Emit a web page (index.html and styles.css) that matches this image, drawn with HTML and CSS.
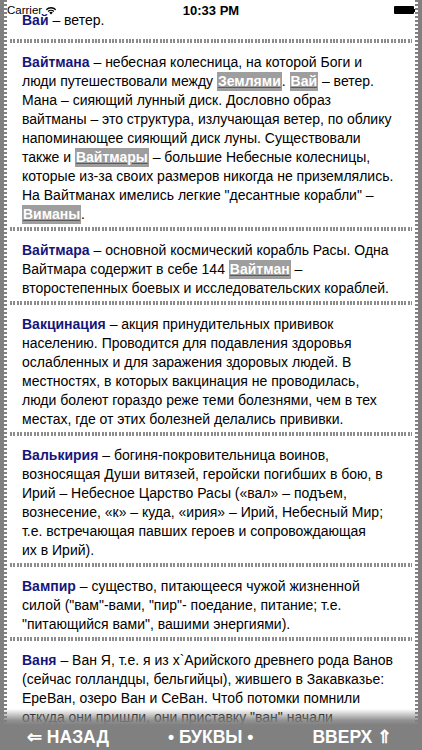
FILE: index.html
```html
<!DOCTYPE html>
<html lang="ru">
<head>
<meta charset="utf-8">
<title>Словарь</title>
<link rel="stylesheet" href="styles.css">
</head>
<body>
<div class="screen">
  <div class="content">
    <div class="strip">
      <div class="entry first"><b class="term">Вай</b> – ветер.</div>
      <div class="sep"></div>
      <div class="entry"><b class="term">Вайтмана</b> – небесная колесница, на которой Боги и<br>люди путешествовали между <span class="link">Землями</span>. <span class="link">Вай</span> – ветер.<br>Мана – сияющий лунный диск. Дословно образ<br>вайтманы – это структура, излучающая ветер, по облику<br>напоминающее сияющий диск луны. Существовали<br>также и <span class="link">Вайтмары</span> – большие Небесные колесницы,<br>которые из-за своих размеров никогда не приземлялись.<br>На Вайтманах имелись легкие "десантные корабли" –<br><span class="link">Виманы</span>.</div>
      <div class="sep"></div>
      <div class="entry"><b class="term">Вайтмара</b> – основной космический корабль Расы. Одна<br>Вайтмара содержит в себе 144 <span class="link">Вайтман</span> –<br>второстепенных боевых и исследовательских кораблей.</div>
      <div class="sep"></div>
      <div class="entry"><b class="term">Вакцинация</b> – акция принудительных прививок<br>населению. Проводится для подавления здоровья<br>ослабленных и для заражения здоровых людей. В<br>местностях, в которых вакцинация не проводилась,<br>люди болеют гораздо реже теми болезнями, чем в тех<br>местах, где от этих болезней делались прививки.</div>
      <div class="sep"></div>
      <div class="entry"><b class="term">Валькирия</b> – богиня-покровительница воинов,<br>возносящая Души витязей, геройски погибших в бою, в<br>Ирий – Небесное Царство Расы («вал» – подъем,<br>вознесение, «к» – куда, «ирия» – Ирий, Небесный Мир;<br>т.е. встречающая павших героев и сопровождающая<br>их в Ирий).</div>
      <div class="sep"></div>
      <div class="entry"><b class="term">Вампир</b> – существо, питающееся чужой жизненной<br>силой ("вам"-вами, "пир"- поедание, питание; т.е.<br>"питающийся вами", вашими энергиями).</div>
      <div class="sep"></div>
      <div class="entry"><b class="term">Ваня</b> – Ван Я, т.е. я из х`Арийского древнего рода Ванов<br>(сейчас голландцы, бельгийцы), жившего в Закавказье:<br>ЕреВан, озеро Ван и СеВан. Чтоб потомки помнили<br>откуда они пришли, они приставку "ван" начали<br>добавлять к своим фамилиям.</div>
    </div>
    <div class="fade"></div>
  </div>
  <div class="statusbar">
    <div class="carrier">Carrier
      <svg class="wifi" width="12" height="9" viewBox="0 0 12 9"><path d="M6 8.6 L4.2 6.6 A2.6 2.6 0 0 1 7.8 6.6 Z" fill="#000"/><path d="M2.6 5 A4.9 4.9 0 0 1 9.4 5 L8.5 6 A3.6 3.6 0 0 0 3.5 6 Z" fill="#000"/><path d="M0.8 3.2 A7.5 7.5 0 0 1 11.2 3.2 L10.3 4.2 A6.2 6.2 0 0 0 1.7 4.2 Z" fill="#000"/></svg>
    </div>
    <div class="time">10:33 PM</div>
    <div class="battery"><span class="cell"></span><span class="tip"></span></div>
  </div>
  <nav class="toolbar">
    <span class="btn">⇐ НАЗАД</span>
    <span class="btn">• БУКВЫ •</span>
    <span class="btn">ВВЕРХ ⇑</span>
  </nav>
</div>
</body>
</html>
```
FILE: styles.css
```css
html, body {
  margin: 0;
  padding: 0;
}
body {
  background: #808080;
  font-family: "Liberation Sans", Arial, sans-serif;
}
.screen {
  position: relative;
  width: 422px;
  height: 750px;
  overflow: hidden;
  background: #808080;
  display: flex;
  flex-direction: column;
}
.content {
  position: relative;
  height: 725px;
  flex: none;
  overflow: hidden;
}
.strip {
  margin: 0 4px;
  padding: 0 3px;
  background:
    repeating-linear-gradient(180deg, #808080 0 2px, transparent 2px 4px) left top / 3px 100% no-repeat,
    repeating-linear-gradient(180deg, #808080 0 2px, transparent 2px 4px) right top / 3px 100% no-repeat,
    #fff;
}
.entry {
  padding: 10px 1px 3px 15px;
  font-size: 14px;
  line-height: 19px;
  color: #000;
  white-space: nowrap;
}
.entry.first {
  padding-top: 11px;
  padding-bottom: 9px;
}
.term {
  color: #16167a;
  font-weight: bold;
}
.link {
  background: #9e9e9e;
  color: #fff;
  font-weight: bold;
  text-decoration: underline;
  text-decoration-color: #5a5a5a;
  padding: 1px 1px 2px;
}
.sep {
  height: 4px;
  margin: 0 3px;
  background: repeating-linear-gradient(90deg, #8c8c8c 0 2px, transparent 2px 3.4px);
}
.fade {
  position: absolute;
  left: 0;
  right: 0;
  bottom: 0;
  height: 16px;
  background: linear-gradient(180deg, rgba(128,128,128,0) 0%, rgba(128,128,128,0.85) 70%, #808080 100%);
}
.statusbar {
  position: absolute;
  top: 0;
  left: 0;
  right: 0;
  height: 20px;
  display: flex;
  align-items: center;
  justify-content: space-between;
  padding: 0 7px;
  font-family: "Liberation Sans", Arial, sans-serif;
  color: #000;
}
.carrier {
  width: 80px;
  font-size: 11.5px;
  display: flex;
  align-items: center;
  gap: 3px;
}
.time {
  font-size: 13px;
  font-weight: bold;
}
.battery {
  width: 80px;
  display: flex;
  justify-content: flex-end;
  align-items: center;
}
.cell {
  width: 20px;
  height: 8px;
  background: #000;
  border-radius: 1px;
}
.tip {
  width: 1.5px;
  height: 3px;
  background: #000;
}
.toolbar {
  height: 25px;
  flex: none;
  display: flex;
  align-items: center;
  justify-content: space-between;
  padding: 0 30px 0 27px;
  color: #fff;
  font-weight: bold;
  font-size: 17.5px;
  line-height: 25px;
}
.btn {
  white-space: nowrap;
}
```
